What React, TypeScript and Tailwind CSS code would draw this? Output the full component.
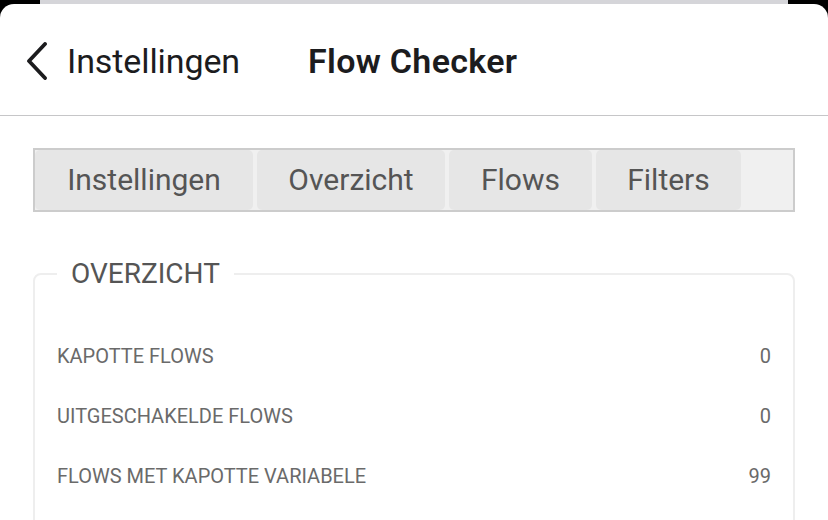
import React from 'react';

const tabs = [
  { label: 'Instellingen', w: 'w-[218px]' },
  { label: 'Overzicht', w: 'w-[188px]' },
  { label: 'Flows', w: 'w-[143px]' },
  { label: 'Filters', w: 'w-[145px]' },
];

const rows = [
  { label: 'KAPOTTE FLOWS', value: '0' },
  { label: 'UITGESCHAKELDE FLOWS', value: '0' },
  { label: 'FLOWS MET KAPOTTE VARIABELE', value: '99' },
];

export default function App() {
  return (
    <div className="w-[828px] h-[520px] overflow-hidden bg-black font-['Roboto',sans-serif]">
      {/* card behind the sheet */}
      <div className="mx-[40px] h-[4px] bg-[#d5d5d9]" />

      <div className="h-[516px] bg-white rounded-t-[14px] overflow-hidden">
        {/* Nav header */}
        <div className="h-[112px] flex items-center border-b border-[#c6c6c8] pt-[3px]">
          <svg className="ml-[26px] w-[22px] h-[38px]" viewBox="0 0 22 38" fill="none">
            <path d="M19 2 L3 19 L19 36" stroke="#1c1c1e" strokeWidth="3.8" strokeLinecap="round" strokeLinejoin="round" />
          </svg>
          <span className="ml-[19px] text-[34px] text-[#1c1c1e] tracking-[-0.1px]">Instellingen</span>
          <span className="ml-[68px] text-[34px] font-semibold text-[#1c1c1e] tracking-[0.3px]">Flow Checker</span>
        </div>

        {/* Tabs */}
        <div className="mt-[32px] mx-[33px] h-[64px] border-2 border-[#cccccc] bg-[#f0f0f0] flex gap-[4px]">
          {tabs.map((t) => (
            <div
              key={t.label}
              className={`${t.w} h-full rounded-[5px] bg-[#e6e6e6] flex items-center justify-center text-[30px] text-[#555555] pb-[2px]`}
            >
              {t.label}
            </div>
          ))}
        </div>

        {/* Overview fieldset */}
        <fieldset className="mt-[46px] mx-[33px] border-2 border-[#eeeeee] rounded-[8px] px-[22px] pt-[36px] pb-[40px]">
          <legend className="px-[14px] text-[28px] leading-[32px] text-[#555555]">OVERZICHT</legend>
          {rows.map((r) => (
            <div key={r.label} className="h-[60px] flex items-center justify-between text-[20px] text-[#6a6a6a]">
              <span>{r.label}</span>
              <span>{r.value}</span>
            </div>
          ))}
        </fieldset>
      </div>
    </div>
  );
}
